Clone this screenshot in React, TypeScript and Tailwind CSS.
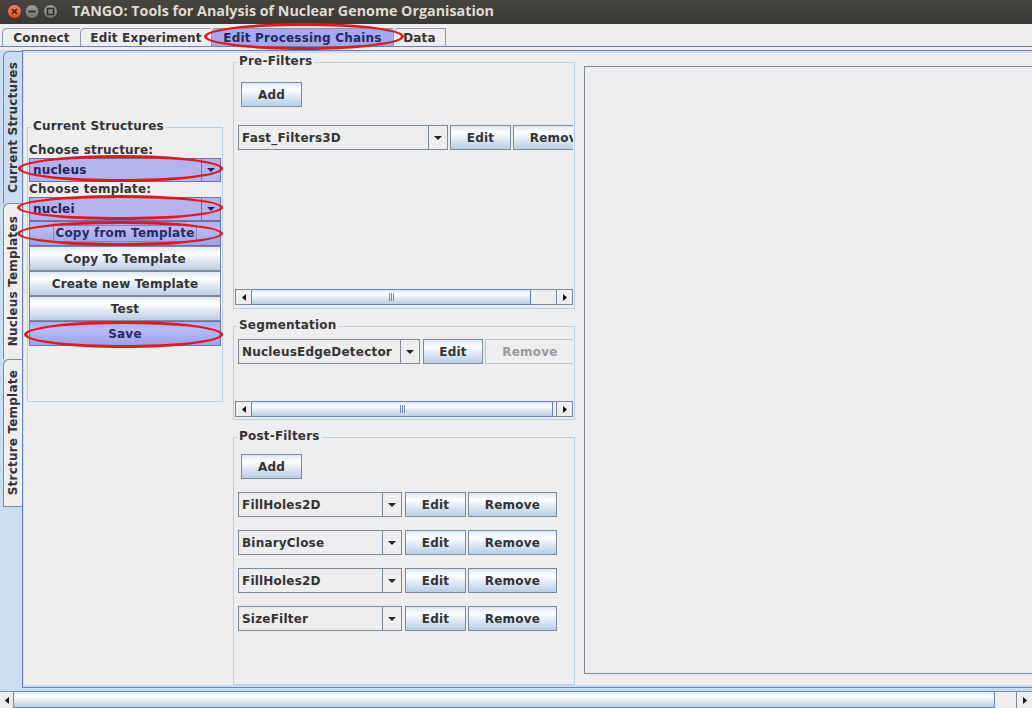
import React from "react";

const GRAD =
  "bg-[linear-gradient(to_bottom,#dde8f3_0%,#ffffff_30%,#dde8f3_60%,#b8cfe5_100%)]";
const LAV =
  "bg-[linear-gradient(to_bottom,#aab0f0_0%,#bcbcf6_30%,#aab0f0_60%,#98a6eb_100%)]";

function DownTri({ c = "#222222" }: { c?: string }) {
  return (
    <svg width="8" height="4" viewBox="0 0 8 4">
      <path d="M0 0H8L4 4Z" fill={c} />
    </svg>
  );
}

function SideTri({ dir }: { dir: "l" | "r" }) {
  return (
    <svg width="4" height="7" viewBox="0 0 4 7">
      {dir === "l" ? (
        <path d="M4 0V7L0 3.5Z" fill="#111111" />
      ) : (
        <path d="M0 0V7L4 3.5Z" fill="#111111" />
      )}
    </svg>
  );
}

function Btn({
  children,
  cls = "",
  hl = false,
  disabled = false,
}: {
  children: React.ReactNode;
  cls?: string;
  hl?: boolean;
  disabled?: boolean;
}) {
  const base = disabled
    ? "bg-[#eeeeee] border-[#b8c4d0] text-[#9a9a9a]"
    : hl
    ? `${LAV} border-[#6a72a8] text-[#2a2a5e]`
    : `${GRAD} border-[#7a8a99] text-[#333333]`;
  return (
    <div
      className={`flex shrink-0 items-center justify-center whitespace-nowrap border ${base} ${cls}`}
    >
      {children}
    </div>
  );
}

function Combo({
  text,
  cls = "",
  hl = false,
}: {
  text: string;
  cls?: string;
  hl?: boolean;
}) {
  return (
    <div
      className={`flex shrink-0 border ${
        hl
          ? "border-[#6a72a8] bg-[#b3b3ee] text-[#22225a]"
          : "border-[#7a8a99] bg-[#eeeeee] text-[#333333]"
      } ${cls}`}
    >
      <div className="flex flex-1 items-center overflow-hidden whitespace-nowrap pl-[3px]">
        {text}
      </div>
      <div
        className={`flex w-[19px] items-center justify-center border-l ${
          hl ? "border-[#6a72a8]" : "border-[#7a8a99]"
        }`}
      >
        <DownTri c={hl ? "#22225a" : "#222222"} />
      </div>
    </div>
  );
}

function Grip() {
  return (
    <div className="flex gap-[1px]">
      <div className="h-[8px] w-[1px] bg-[#6f86b8]" />
      <div className="h-[8px] w-[1px] bg-[#6f86b8]" />
      <div className="h-[8px] w-[1px] bg-[#6f86b8]" />
    </div>
  );
}

function HScroll({ thumb, cls = "" }: { thumb: string; cls?: string }) {
  return (
    <div className={`flex h-[16px] border border-[#7a8a99] bg-[#eeeeee] ${cls}`}>
      <div className="flex w-[15px] items-center justify-center">
        <SideTri dir="l" />
      </div>
      <div
        className={`-my-[1px] flex items-center justify-center border border-[#6382bf] ${GRAD} ${thumb}`}
      >
        <Grip />
      </div>
      <div className="flex-1" />
      <div className="flex w-[16px] items-center justify-center border-l border-[#7a8a99]">
        <SideTri dir="r" />
      </div>
    </div>
  );
}

function Titled({
  title,
  cls,
  children,
}: {
  title: string;
  cls: string;
  children: React.ReactNode;
}) {
  return (
    <div className={`relative border border-[#b8cfe5] ${cls}`}>
      <div className="absolute -top-[9px] left-[3px] bg-[#eeeeee] px-[2px] leading-[14px] text-[#333333]">
        {title}
      </div>
      {children}
    </div>
  );
}

function TopTab({
  children,
  w,
  sel = false,
  last = false,
}: {
  children: React.ReactNode;
  w: string;
  sel?: boolean;
  last?: boolean;
}) {
  return (
    <div
      className={`flex h-[18px] items-center justify-center rounded-tl-[5px] border-l border-t border-[#8a9aab] ${
        last ? "border-r" : ""
      } ${sel ? "bg-[#a3aaf0] text-[#262660]" : "bg-[#eeeeee] text-[#333333]"} ${w}`}
    >
      {children}
    </div>
  );
}

function VTab({
  label,
  h,
  sel = false,
  last = false,
}: {
  label: string;
  h: string;
  sel?: boolean;
  last?: boolean;
}) {
  return (
    <div
      className={`ml-[3px] flex items-center justify-center rounded-tl-[6px] border-l border-t border-[#7a8a99] ${
        last ? "border-b" : ""
      } ${sel ? "bg-[#c8ddf2]" : "bg-[#eeeeee]"} ${h}`}
    >
      <div className="rotate-180 leading-[14px] text-[#333333] [writing-mode:vertical-rl]">
        {label}
      </div>
    </div>
  );
}

function FilterRow({
  name,
  comboW,
  editW,
  gap1,
  removeW,
  removeDisabled = false,
}: {
  name: string;
  comboW: string;
  editW: string;
  gap1: string;
  removeW: string;
  removeDisabled?: boolean;
}) {
  return (
    <div className="flex h-[25px]">
      <Combo text={name} cls={`${comboW} h-[25px]`} />
      <div className={gap1} />
      <Btn cls={`${editW} h-[25px] text-[#1a1a1a]`}>Edit</Btn>
      <div className="w-[2px] shrink-0" />
      <Btn cls={`${removeW} h-[25px]`} disabled={removeDisabled}>
        Remove
      </Btn>
    </div>
  );
}

function Ellipse({ cls }: { cls: string }) {
  return (
    <div
      className={`pointer-events-none absolute rounded-[50%] border-[3px] border-[#e8161c] ${cls}`}
    />
  );
}

export default function App() {
  return (
    <div className="relative h-[708px] w-[1032px] overflow-hidden bg-[#eeeeee] font-['DejaVu_Sans',sans-serif] text-[12px] font-bold tracking-[0.2px] text-[#333333]">
      {/* Title bar */}
      <div className="flex h-[24px] items-center bg-[linear-gradient(to_bottom,#46453f,#3a3935)]">
        <div className="w-[72px] shrink-0">
          <svg width="64" height="24" viewBox="0 0 64 24">
            <defs>
              <linearGradient id="og" x1="0" y1="0" x2="0" y2="1">
                <stop offset="0" stopColor="#f5875a" />
                <stop offset="1" stopColor="#df4a1a" />
              </linearGradient>
              <linearGradient id="gg" x1="0" y1="0" x2="0" y2="1">
                <stop offset="0" stopColor="#9b9a95" />
                <stop offset="1" stopColor="#74736e" />
              </linearGradient>
            </defs>
            <circle cx="14.5" cy="11.5" r="7" fill="url(#og)" stroke="#2e2d2a" strokeWidth="0.8" />
            <path d="M12 9L17 14M17 9L12 14" stroke="#3a2418" strokeWidth="1.6" />
            <circle cx="32" cy="11.5" r="7" fill="url(#gg)" stroke="#2e2d2a" strokeWidth="0.8" />
            <path d="M28.5 11.5H35.5" stroke="#2b2a27" strokeWidth="1.8" />
            <circle cx="50.5" cy="11.5" r="7" fill="url(#gg)" stroke="#2e2d2a" strokeWidth="0.8" />
            <rect x="47.5" y="8.5" width="6" height="6" fill="none" stroke="#2b2a27" strokeWidth="1.4" />
          </svg>
        </div>
        <div className="-mt-[2px] whitespace-nowrap font-['Open_Sans',sans-serif] text-[14.3px] font-bold tracking-normal text-[#dfdbd2]">
          TANGO: Tools for Analysis of Nuclear Genome Organisation
        </div>
      </div>

      {/* Top tabs */}
      <div className="flex h-[22px] items-end pl-[2px]">
        <TopTab w="w-[78px]">Connect</TopTab>
        <TopTab w="w-[131px]">Edit Experiment</TopTab>
        <TopTab w="w-[182px]" sel>
          Edit Processing Chains
        </TopTab>
        <TopTab w="w-[53px]" last>
          Data
        </TopTab>
      </div>

      {/* Main content */}
      <div className="flex h-[645px] flex-col">
        <div className="h-[4px] border-t border-[#6382bf] bg-[#eeeeee]" />
        <div className="flex flex-1 bg-[#c8ddf2]">
          <div className="flex w-[22px] shrink-0 flex-col pt-[1px]">
            <VTab label="Current Structures" h="h-[152px]" sel />
            <VTab label="Nucleus Templates" h="h-[156px]" />
            <VTab label="Strcture Template" h="h-[148px]" last />
          </div>
          <div className="h-[638px] w-[1010px] shrink-0 border-b border-l border-t border-[#6382bf] pb-[2px] pl-[1px] pt-[2px]">
            <div className="flex h-full overflow-hidden bg-[#eeeeee]">
              {/* Left column */}
              <div className="w-[209px] shrink-0">
                <Titled title="Current Structures" cls="ml-[3px] mt-[74px] h-[275px] w-[196px] pl-[1px] pt-[14px]">
                  <div className="h-[16px] leading-[16px]">Choose structure:</div>
                  <Combo text="nucleus" cls="h-[24px] w-[192px]" hl />
                  <div className="h-[15px] leading-[15px]">Choose template:</div>
                  <Combo text="nuclei" cls="h-[24px] w-[192px]" hl />
                  <Btn cls="h-[25px] w-[192px]" hl>
                    <span className="border border-[#7f86c8] px-[1px] leading-[15px]">
                      Copy from Template
                    </span>
                  </Btn>
                  <Btn cls="h-[25px] w-[192px]">Copy To Template</Btn>
                  <Btn cls="h-[25px] w-[192px]">Create new Template</Btn>
                  <Btn cls="h-[25px] w-[192px]">Test</Btn>
                  <Btn cls="h-[25px] w-[192px]" hl>
                    Save
                  </Btn>
                </Titled>
              </div>

              {/* Middle column */}
              <div className="w-[342px] shrink-0">
                <Titled title="Pre-Filters" cls="mt-[9px] flex h-[247px] w-[342px] flex-col">
                  <div className="pl-[7px] pt-[19px]">
                    <Btn cls="h-[25px] w-[61px] text-[#1a1a1a]">Add</Btn>
                  </div>
                  <div className="ml-[4px] mt-[18px] w-[335px] overflow-hidden">
                    <FilterRow
                      name="Fast_Filters3D"
                      comboW="w-[210px]"
                      gap1="w-[2px] shrink-0"
                      editW="w-[61px]"
                      removeW="w-[89px]"
                    />
                  </div>
                  <div className="flex-1" />
                  <HScroll thumb="w-[280px]" cls="mb-[3px] ml-[1px] w-[338px]" />
                </Titled>

                <Titled title="Segmentation" cls="mt-[17px] flex h-[94px] w-[342px] flex-col">
                  <div className="ml-[4px] mt-[12px] w-[335px] overflow-hidden">
                    <FilterRow
                      name="NucleusEdgeDetector"
                      comboW="w-[182px]"
                      gap1="w-[3px] shrink-0"
                      editW="w-[60px]"
                      removeW="w-[90px]"
                      removeDisabled
                    />
                  </div>
                  <div className="flex-1" />
                  <HScroll thumb="w-[302px]" cls="mb-[2px] ml-[1px] w-[338px]" />
                </Titled>

                <Titled title="Post-Filters" cls="mt-[17px] flex h-[248px] w-[342px] flex-col">
                  <div className="pl-[7px] pt-[16px]">
                    <Btn cls="h-[25px] w-[61px] text-[#1a1a1a]">Add</Btn>
                  </div>
                  <div className="ml-[4px] mt-[13px] flex flex-col gap-[13px]">
                    {["FillHoles2D", "BinaryClose", "FillHoles2D", "SizeFilter"].map((n, i) => (
                      <FilterRow
                        key={i}
                        name={n}
                        comboW="w-[164px]"
                        gap1="w-[3px] shrink-0"
                        editW="w-[61px]"
                        removeW="w-[89px]"
                      />
                    ))}
                  </div>
                </Titled>
              </div>

              {/* Right panel */}
              <div className="ml-[9px] mt-[13px] h-[608px] w-[470px] shrink-0 border border-[#7a8a99] bg-[#eeeeee]" />
            </div>
          </div>
        </div>
      </div>

      {/* Bottom scrollbar */}
      <div className="flex h-[17px] border-t border-[#7a8a99] bg-[#eeeeee]">
        <div className="flex w-[13px] items-center justify-center">
          <SideTri dir="l" />
        </div>
        <div className={`-mt-[1px] w-[982px] border border-[#6382bf] ${GRAD}`} />
        <div className="flex-1" />
        <div className="flex w-[16px] items-center justify-center border-l border-[#7a8a99]">
          <SideTri dir="r" />
        </div>
      </div>

      {/* Annotation ellipses */}
      <Ellipse cls="left-[204px] top-[23px] h-[27px] w-[200px]" />
      <Ellipse cls="left-[18px] top-[155px] h-[27px] w-[205px]" />
      <Ellipse cls="left-[17px] top-[195px] h-[25px] w-[206px]" />
      <Ellipse cls="left-[17px] top-[221px] h-[25px] w-[206px]" />
      <Ellipse cls="left-[24px] top-[321px] h-[27px] w-[199px]" />
    </div>
  );
}
